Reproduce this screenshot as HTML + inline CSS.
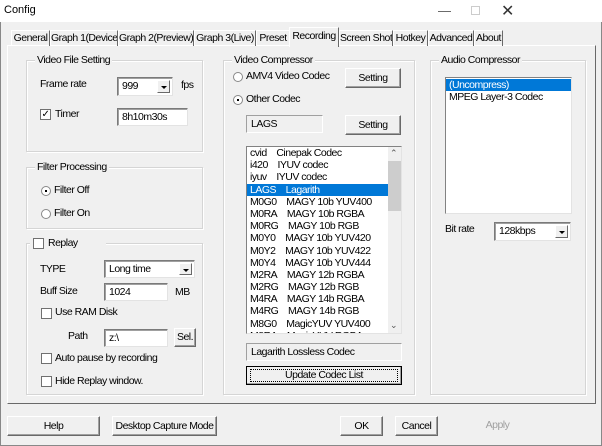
<!DOCTYPE html>
<html><head><style>
*{box-sizing:border-box;margin:0;padding:0;white-space:nowrap}
body{width:602px;height:446px;background:#f0f0f0;font-family:"Liberation Sans",sans-serif;font-size:10.5px;letter-spacing:-0.5px;color:#000;position:relative;overflow:hidden}
.a{position:absolute}
.win{position:absolute;left:0;top:0;width:602px;height:446px;border:1px solid #888;}
.title{position:absolute;left:0;top:0;width:602px;height:22px;background:#fff}
.tab{position:absolute;top:30px;height:16px;border:1px solid #fff;border-right:1px solid #696969;border-bottom:none;text-align:center;line-height:14px;overflow:hidden}
.grp{position:absolute;border:1px solid #d5d5d5;box-shadow:inset 1px 1px 0 #fff,1px 1px 0 #fff}
.gl{position:absolute;top:-7px;left:8px;background:#f0f0f0;padding:0 2px;line-height:13px}
.edit{position:absolute;background:#fff;border:1px solid #7a7a7a;border-right-color:#e3e3e3;border-bottom-color:#e3e3e3;box-shadow:inset 1px 1px 0 #a0a0a0;padding:2px 4px;line-height:13px}
.btn{position:absolute;background:#f0f0f0;border:1px solid;border-color:#fff #696969 #696969 #fff;box-shadow:inset -1px -1px 0 #a0a0a0;text-align:center}
.cb{position:absolute;width:11px;height:11px;background:#fff;border:1px solid #707070;}
.rd{position:absolute;width:10px;height:10px;border-radius:50%;background:#fff;border:1px solid #888}
.dd{position:absolute;top:2px;right:2px;width:13px;bottom:2px;background:#f0f0f0;border:1px solid;border-color:#fff #696969 #696969 #fff}
.dd:after{content:"";position:absolute;left:3px;top:5px;border:3px solid transparent;border-top:3px solid #000;border-bottom:0}
.list div{height:12.2px;line-height:12.2px;padding-left:3px}
</style></head><body>
<div class="win"></div>
<div class="title"></div>
<div class="a" style="left:4px;top:4px;font-size:11px;letter-spacing:0">Config</div>
<div class="a" style="left:438px;top:3px;color:#555;font-size:13px">—</div>
<div class="a" style="left:471px;top:6px;width:9px;height:9px;border:1px solid #ccc"></div>
<div class="a" style="left:501px;top:1px;font-size:16px;color:#333">✕</div>

<div class="a" style="left:7px;top:45px;width:589px;height:359px;border:1px solid;border-color:#fff #696969 #696969 #fff"></div>
<div class="tab" style="left:11px;width:39px">General</div>
<div class="tab" style="left:50px;width:68px">Graph 1(Device)</div>
<div class="tab" style="left:118px;width:76px">Graph 2(Preview)</div>
<div class="tab" style="left:194px;width:62px">Graph 3(Live)</div>
<div class="tab" style="left:256px;width:34px">Preset</div>
<div class="tab" style="left:289px;width:50px;top:27px;height:20px;background:#f0f0f0;line-height:17px">Recording</div>
<div class="tab" style="left:339px;width:54px">Screen Shot</div>
<div class="tab" style="left:393px;width:35px">Hotkey</div>
<div class="tab" style="left:428px;width:46px">Advanced</div>
<div class="tab" style="left:474px;width:29px">About</div>

<!-- Video File Setting -->
<div class="grp" style="left:26px;top:60px;width:177px;height:92px"><span class="gl">Video File Setting</span></div>
<div class="a" style="left:40px;top:78px">Frame rate</div>
<div class="edit" style="left:117px;top:77px;width:56px;height:19px">999<div class="dd"></div></div>
<div class="a" style="left:181px;top:79px">fps</div>
<div class="cb" style="left:40px;top:109px;font-size:10px;line-height:9px;text-align:center">✓</div>
<div class="a" style="left:55px;top:108px">Timer</div>
<div class="edit" style="left:117px;top:108px;width:71px;height:18px">8h10m30s</div>

<div class="grp" style="left:26px;top:167px;width:177px;height:62px"><span class="gl">Filter Processing</span></div>
<div class="rd" style="left:41px;top:186px"><div style="position:absolute;left:3px;top:3px;width:2px;height:2px;background:#000"></div></div>
<div class="a" style="left:54px;top:184px">Filter Off</div>
<div class="rd" style="left:41px;top:209px"></div>
<div class="a" style="left:54px;top:207px">Filter On</div>

<div class="grp" style="left:26px;top:243px;width:177px;height:152px"></div>
<div class="a" style="left:30px;top:236px;width:76px;height:14px;background:#f0f0f0"></div>
<div class="cb" style="left:33px;top:238px"></div>
<div class="a" style="left:48px;top:237px">Replay</div>
<div class="a" style="left:40px;top:263px">TYPE</div>
<div class="edit" style="left:104px;top:260px;width:91px;height:18px">Long time<div class="dd"></div></div>
<div class="a" style="left:40px;top:285px">Buff Size</div>
<div class="edit" style="left:104px;top:283px;width:64px;height:18px">1024</div>
<div class="a" style="left:175px;top:286px">MB</div>
<div class="cb" style="left:41px;top:308px"></div>
<div class="a" style="left:55px;top:306px">Use RAM Disk</div>
<div class="a" style="left:68px;top:330px">Path</div>
<div class="edit" style="left:104px;top:329px;width:64px;height:18px">z:\</div>
<div class="btn" style="left:174px;top:328px;width:22px;height:19px;line-height:17px">Sel.</div>
<div class="cb" style="left:41px;top:353px"></div>
<div class="a" style="left:55px;top:352px">Auto pause by recording</div>
<div class="cb" style="left:41px;top:376px"></div>
<div class="a" style="left:55px;top:375px">Hide Replay window.</div>

<!-- Video Compressor -->
<div class="grp" style="left:223px;top:60px;width:192px;height:335px"><span class="gl">Video Compressor</span></div>
<div class="rd" style="left:233px;top:72px"></div>
<div class="a" style="left:246px;top:70px">AMV4 Video Codec</div>
<div class="btn" style="left:345px;top:68px;width:56px;height:20px;line-height:18px">Setting</div>
<div class="rd" style="left:233px;top:95px"><div style="position:absolute;left:3px;top:3px;width:2px;height:2px;background:#000"></div></div>
<div class="a" style="left:246px;top:93px">Other Codec</div>
<div class="a" style="left:246px;top:115px;width:77px;height:18px;border:1px solid #a0a0a0;border-right-color:#fff;border-bottom-color:#fff;padding:2px 4px">LAGS</div>
<div class="btn" style="left:345px;top:115px;width:56px;height:20px;line-height:18px">Setting</div>
<div class="a list" style="left:246px;top:146px;width:156px;height:188px;background:#fff;border:1px solid #828282;border-right-color:#e3e3e3;border-bottom-color:#e3e3e3;overflow:hidden">
<div>cvid&nbsp;&nbsp;&nbsp; Cinepak Codec</div>
<div>i420&nbsp;&nbsp;&nbsp; IYUV codec</div>
<div>iyuv&nbsp;&nbsp;&nbsp; IYUV codec</div>
<div style="background:#0078d7;color:#fff;width:141px">LAGS&nbsp;&nbsp;&nbsp; Lagarith</div>
<div>M0G0&nbsp;&nbsp;&nbsp; MAGY 10b YUV400</div>
<div>M0RA&nbsp;&nbsp;&nbsp; MAGY 10b RGBA</div>
<div>M0RG&nbsp;&nbsp;&nbsp; MAGY 10b RGB</div>
<div>M0Y0&nbsp;&nbsp;&nbsp; MAGY 10b YUV420</div>
<div>M0Y2&nbsp;&nbsp;&nbsp; MAGY 10b YUV422</div>
<div>M0Y4&nbsp;&nbsp;&nbsp; MAGY 10b YUV444</div>
<div>M2RA&nbsp;&nbsp;&nbsp; MAGY 12b RGBA</div>
<div>M2RG&nbsp;&nbsp;&nbsp; MAGY 12b RGB</div>
<div>M4RA&nbsp;&nbsp;&nbsp; MAGY 14b RGBA</div>
<div>M4RG&nbsp;&nbsp;&nbsp; MAGY 14b RGB</div>
<div>M8G0&nbsp;&nbsp;&nbsp; MagicYUV YUV400</div>
<div>M8RA&nbsp;&nbsp;&nbsp; MagicYUV RGBA</div>
<div style="position:absolute;left:141px;top:0;width:13px;height:186px;background:#f0f0f0;padding:0"></div>
<div style="position:absolute;left:141px;top:14px;width:13px;height:50px;background:#cdcdcd;padding:0"></div>
<div style="position:absolute;left:143px;top:0;font-size:9px;color:#555;padding:0">⌃</div>
<div style="position:absolute;left:143px;top:172px;font-size:9px;color:#555;padding:0">⌄</div>
</div>
<div class="a" style="left:246px;top:343px;width:156px;height:18px;border:1px solid #a0a0a0;border-right-color:#fff;border-bottom-color:#fff;padding:2px 4px">Lagarith Lossless Codec</div>
<div class="btn" style="left:246px;top:366px;width:156px;height:19px;line-height:16px;border:1px solid #000"><div style="position:absolute;left:3px;top:2px;right:3px;bottom:2px;border:1px dotted #000"></div>Update Codec List</div>

<!-- Audio Compressor -->
<div class="grp" style="left:430px;top:60px;width:156px;height:335px"><span class="gl">Audio Compressor</span></div>
<div class="a list" style="left:445px;top:77px;width:127px;height:137px;background:#fff;border:1px solid #828282;border-right-color:#e3e3e3;border-bottom-color:#e3e3e3;padding-top:1px">
<div style="background:#0078d7;color:#fff">(Uncompress)</div>
<div>MPEG Layer-3 Codec</div>
</div>
<div class="a" style="left:445px;top:223px">Bit rate</div>
<div class="edit" style="left:494px;top:222px;width:77px;height:19px">128kbps<div class="dd"></div></div>

<!-- bottom -->
<div class="btn" style="left:7px;top:416px;width:93px;height:20px;line-height:18px">Help</div>
<div class="btn" style="left:112px;top:416px;width:105px;height:20px;line-height:18px">Desktop Capture Mode</div>
<div class="btn" style="left:340px;top:416px;width:43px;height:20px;line-height:18px">OK</div>
<div class="btn" style="left:395px;top:416px;width:43px;height:20px;line-height:18px">Cancel</div>
<div class="a" style="left:475px;top:416px;width:45px;height:20px;line-height:18px;text-align:center;color:#a0a0a0">Apply</div>
</body></html>
